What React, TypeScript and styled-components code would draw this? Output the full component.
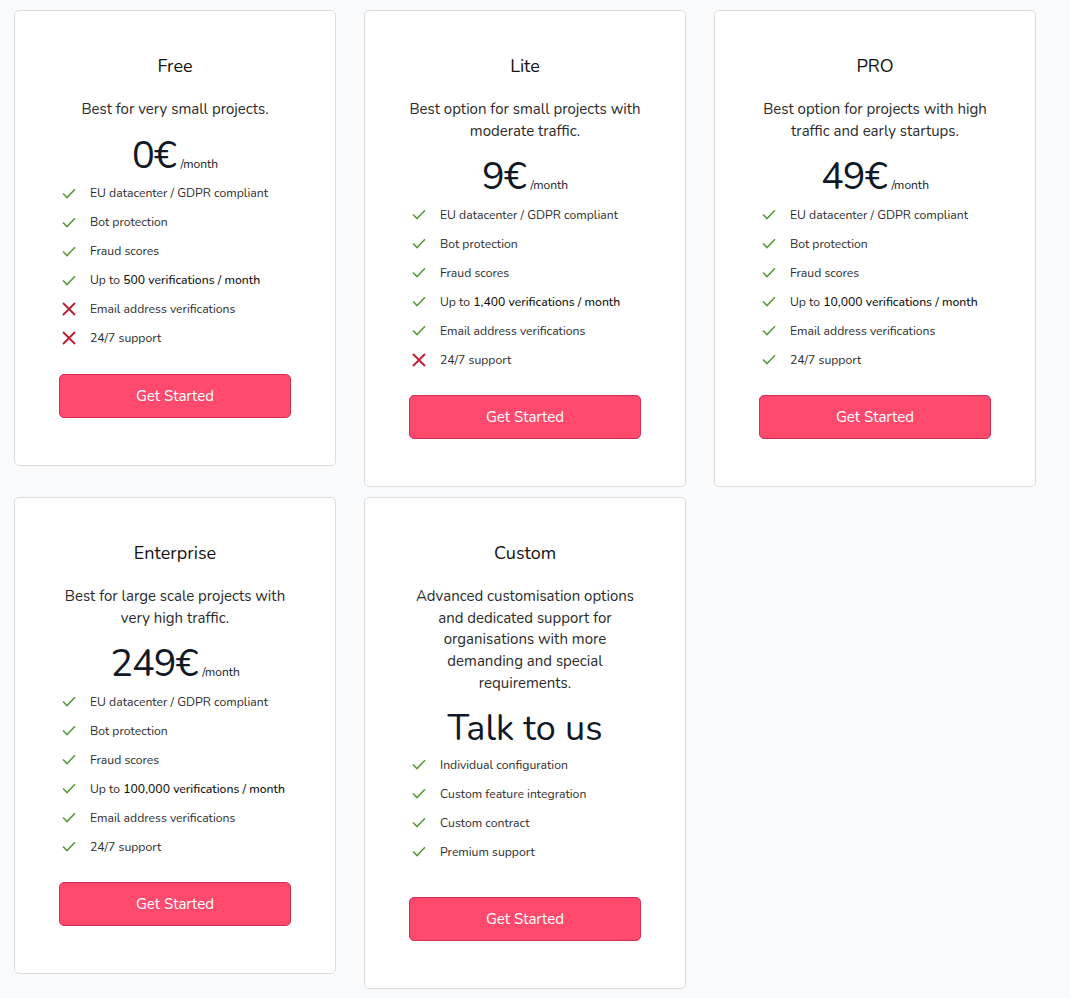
import React from "react";
import styled, { createGlobalStyle } from "styled-components";

const GlobalStyle = createGlobalStyle`
  html, body {
    margin: 0;
    padding: 0;
    background-color: #f9fafb;
  }
  body {
    font-family: "Nunito", Lato, "Noto Sans", sans-serif;
    color: #222;
  }
`;

const Page = styled.div`
  display: grid;
  grid-template-columns: repeat(3, 322px);
  column-gap: 28px;
  row-gap: 10px;
  align-items: start;
  padding: 10px 14px;
`;

const Card = styled.div`
  display: flex;
  flex-direction: column;
  align-items: center;
  box-sizing: border-box;
  padding: 44px 44px 47px;
  background-color: #ffffff;
  border: 1px solid #dcdcdc;
  border-radius: 5px;
`;

const Title = styled.h2`
  margin: 0;
  font-size: 18px;
  line-height: 22px;
  font-weight: 400;
  color: #111;
`;

const Description = styled.p`
  margin: 22px 0 0;
  font-size: 15px;
  line-height: 21.6px;
  text-align: center;
  color: #2b2b2b;
`;

const PriceRow = styled.div`
  display: flex;
  align-items: baseline;
  justify-content: center;
  margin: 20px 0 0;
  line-height: 29px;
  color: #111827;
`;

const Amount = styled.span`
  font-size: 38px;
  letter-spacing: -1px;
`;

const Per = styled.span`
  font-size: 12px;
  margin-left: 5px;
`;

const TalkTo = styled.div`
  margin: 14px 0 0;
  font-size: 36px;
  line-height: 42px;
  color: #111827;
`;

const FeatureList = styled.ul<{ $gapAfter: number }>`
  list-style: none;
  margin: 0 0 ${(p) => p.$gapAfter}px;
  padding: 0 0 0 2px;
  align-self: stretch;
`;

const Feature = styled.li`
  display: flex;
  align-items: center;
  height: 29px;
  font-size: 12.2px;
  color: #2b2b2b;
  white-space: nowrap;
`;

const IconBox = styled.span`
  display: inline-flex;
  align-items: center;
  justify-content: center;
  width: 15px;
  margin-right: 14px;
`;

const Strong = styled.span`
  font-weight: 500;
  color: #111;
`;

const Button = styled.button`
  align-self: stretch;
  margin-top: 21px;
  height: 44px;
  border: 1px solid #cf2f55;
  border-radius: 5px;
  background-color: #ff4a6e;
  color: #ffffff;
  font-family: inherit;
  font-size: 15px;
  cursor: pointer;
`;

const Check = () => (
  <svg width="14" height="11" viewBox="0 0 14 11" fill="none">
    <path d="M1 5.5 L5 9.5 L13 1.2" stroke="#5b9a3c" strokeWidth="1.6" />
  </svg>
);

const Cross = () => (
  <svg width="14" height="14" viewBox="0 0 14 14" fill="none">
    <path d="M1 1 L13 13 M13 1 L1 13" stroke="#c41a2e" strokeWidth="1.8" />
  </svg>
);

type Item = { ok: boolean; text: string; strong?: string };

type Plan = {
  name: string;
  desc: React.ReactNode;
  price?: string;
  talk?: boolean;
  features: Item[];
};

const base = (volume: string, email: boolean, support: boolean): Item[] => [
  { ok: true, text: "EU datacenter / GDPR compliant" },
  { ok: true, text: "Bot protection" },
  { ok: true, text: "Fraud scores" },
  { ok: true, text: "Up to ", strong: `${volume} verifications / month` },
  { ok: email, text: "Email address verifications" },
  { ok: support, text: "24/7 support" },
];

const plans: Plan[] = [
  { name: "Free", desc: "Best for very small projects.", price: "0€", features: base("500", false, false) },
  {
    name: "Lite",
    desc: (
      <>
        Best option for small projects with
        <br />
        moderate traffic.
      </>
    ),
    price: "9€",
    features: base("1,400", true, false),
  },
  {
    name: "PRO",
    desc: (
      <>
        Best option for projects with high
        <br />
        traffic and early startups.
      </>
    ),
    price: "49€",
    features: base("10,000", true, true),
  },
  {
    name: "Enterprise",
    desc: (
      <>
        Best for large scale projects with
        <br />
        very high traffic.
      </>
    ),
    price: "249€",
    features: base("100,000", true, true),
  },
  {
    name: "Custom",
    desc: (
      <>
        Advanced customisation options
        <br />
        and dedicated support for
        <br />
        organisations with more
        <br />
        demanding and special
        <br />
        requirements.
      </>
    ),
    talk: true,
    features: [
      { ok: true, text: "Individual configuration" },
      { ok: true, text: "Custom feature integration" },
      { ok: true, text: "Custom contract" },
      { ok: true, text: "Premium support" },
    ],
  },
];

const PlanCard = ({ plan }: { plan: Plan }) => (
  <Card>
    <Title>{plan.name}</Title>
    <Description>{plan.desc}</Description>
    {plan.talk ? (
      <TalkTo>Talk to us</TalkTo>
    ) : (
      <PriceRow>
        <Amount>{plan.price}</Amount>
        <Per>/month</Per>
      </PriceRow>
    )}
    <FeatureList $gapAfter={plan.talk ? 10 : 0}>
      {plan.features.map((f) => (
        <Feature key={f.text + (f.strong || "")}>
          <IconBox>{f.ok ? <Check /> : <Cross />}</IconBox>
          <span>
            {f.text}
            {f.strong && <Strong>{f.strong}</Strong>}
          </span>
        </Feature>
      ))}
    </FeatureList>
    <Button>Get Started</Button>
  </Card>
);

const App = () => (
  <>
    <GlobalStyle />
    <Page>
      {plans.map((p) => (
        <PlanCard key={p.name} plan={p} />
      ))}
    </Page>
  </>
);

export default App;
